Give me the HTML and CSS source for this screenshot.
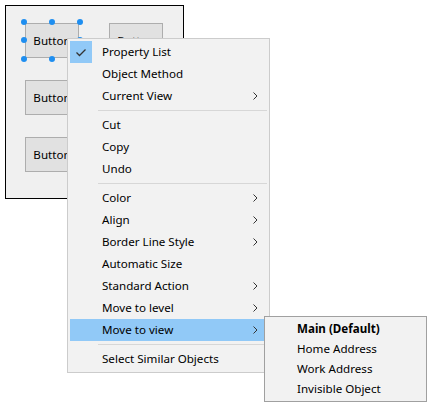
FILE: index.html
```html
<!DOCTYPE html>
<html>
<head>
<meta charset="utf-8">
<link rel="stylesheet" href="styles.css">
</head>
<body>
<div class="stage">
  <div class="canvas">
    <div class="btn b1">Button</div>
    <div class="btn b2">Button</div>
    <div class="btn b3">Button</div>
    <div class="btn b4">Button</div>
    <span class="handle" style="left:15px;top:13px"></span>
    <span class="handle" style="left:43px;top:13px"></span>
    <span class="handle" style="left:71px;top:13px"></span>
    <span class="handle" style="left:15px;top:31px"></span>
    <span class="handle" style="left:71px;top:31px"></span>
    <span class="handle" style="left:15px;top:50px"></span>
    <span class="handle" style="left:43px;top:50px"></span>
  </div>

  <div class="menu main-menu">
    <div class="item checked">
      <span class="check"><svg width="22" height="22" viewBox="0 0 22 22"><path d="M6.5 11.5 L9.5 14.5 L15.5 8.5" fill="none" stroke="#333" stroke-width="1.3"/></svg></span>
      <span class="label">Property List</span>
    </div>
    <div class="item"><span class="check"></span><span class="label">Object Method</span></div>
    <div class="item"><span class="check"></span><span class="label">Current View</span><span class="arrow"><svg width="5" height="8" viewBox="0 0 5 8"><path d="M0.5 0.5 L4 4 L0.5 7.5" fill="none" stroke="#333" stroke-width="1"/></svg></span></div>
    <div class="sep"></div>
    <div class="item"><span class="check"></span><span class="label">Cut</span></div>
    <div class="item"><span class="check"></span><span class="label">Copy</span></div>
    <div class="item"><span class="check"></span><span class="label">Undo</span></div>
    <div class="sep"></div>
    <div class="item"><span class="check"></span><span class="label">Color</span><span class="arrow"><svg width="5" height="8" viewBox="0 0 5 8"><path d="M0.5 0.5 L4 4 L0.5 7.5" fill="none" stroke="#333" stroke-width="1"/></svg></span></div>
    <div class="item"><span class="check"></span><span class="label">Align</span><span class="arrow"><svg width="5" height="8" viewBox="0 0 5 8"><path d="M0.5 0.5 L4 4 L0.5 7.5" fill="none" stroke="#333" stroke-width="1"/></svg></span></div>
    <div class="item"><span class="check"></span><span class="label">Border Line Style</span><span class="arrow"><svg width="5" height="8" viewBox="0 0 5 8"><path d="M0.5 0.5 L4 4 L0.5 7.5" fill="none" stroke="#333" stroke-width="1"/></svg></span></div>
    <div class="item"><span class="check"></span><span class="label">Automatic Size</span></div>
    <div class="item"><span class="check"></span><span class="label">Standard Action</span><span class="arrow"><svg width="5" height="8" viewBox="0 0 5 8"><path d="M0.5 0.5 L4 4 L0.5 7.5" fill="none" stroke="#333" stroke-width="1"/></svg></span></div>
    <div class="item"><span class="check"></span><span class="label">Move to level</span><span class="arrow"><svg width="5" height="8" viewBox="0 0 5 8"><path d="M0.5 0.5 L4 4 L0.5 7.5" fill="none" stroke="#333" stroke-width="1"/></svg></span></div>
    <div class="item active"><span class="check"></span><span class="label">Move to view</span><span class="arrow"><svg width="5" height="8" viewBox="0 0 5 8"><path d="M0.5 0.5 L4 4 L0.5 7.5" fill="none" stroke="#333" stroke-width="1"/></svg></span></div>
    <div class="sep"></div>
    <div class="item"><span class="check"></span><span class="label">Select Similar Objects</span></div>
  </div>

  <div class="menu sub-menu">
    <div class="sitem bold">Main (Default)</div>
    <div class="sitem">Home Address</div>
    <div class="sitem">Work Address</div>
    <div class="sitem">Invisible Object</div>
  </div>
</div>
</body>
</html>
```

FILE: styles.css
```css
* { box-sizing: border-box; }
html, body {
  margin: 0;
  padding: 0;
  background: #ffffff;
}
body {
  font-family: "Noto Sans", "Open Sans", sans-serif;
  font-size: 11.6px;
  color: #000;
}
.stage {
  position: relative;
  width: 433px;
  height: 407px;
  overflow: hidden;
}
.canvas {
  position: absolute;
  left: 5px;
  top: 5px;
  width: 179px;
  height: 194px;
  border: 1px solid #000;
  background: #f0f0f0;
}
.btn {
  position: absolute;
  width: 54px;
  height: 35px;
  background: #e1e1e1;
  border: 1px solid #adadad;
  display: flex;
  align-items: center;
  justify-content: center;
  overflow: hidden;
  white-space: nowrap;
}
.b1 { left: 19px; top: 17px; }
.b2 { left: 103px; top: 17px; }
.b3 { left: 19px; top: 74px; }
.b4 { left: 19px; top: 131px; }
.handle {
  position: absolute;
  width: 6px;
  height: 6px;
  border-radius: 50%;
  background: #1e8ef0;
}

.menu {
  position: absolute;
  background: #f2f2f2;
  padding: 2px;
}
.main-menu {
  left: 67px;
  top: 38px;
  width: 203px;
  border: 1px solid #cccccc;
}
.sub-menu {
  left: 264px;
  top: 316px;
  width: 163px;
  border: 1px solid #a0a0a0;
}
.item {
  height: 22px;
  display: flex;
  align-items: center;
}
.item.active { background: #91c9f7; }
.check {
  width: 22px;
  height: 22px;
  flex: none;
  margin-right: 10px;
}
.checked .check { background: #91c9f7; }
.check svg { display: block; }
.label {
  flex: 1;
  white-space: nowrap;
  padding-bottom: 1px;
}
.arrow {
  width: 5px;
  height: 8px;
  margin-right: 9px;
  flex: none;
}
.arrow svg { display: block; }
.sep {
  height: 7px;
  padding-top: 3px;
  margin-left: 28px;
}
.sep::before {
  content: "";
  display: block;
  height: 1px;
  background: #d7d7d7;
}
.sitem {
  height: 20px;
  line-height: 19px;
  padding-left: 30px;
  white-space: nowrap;
}
.sitem.bold { font-weight: bold; }
```
